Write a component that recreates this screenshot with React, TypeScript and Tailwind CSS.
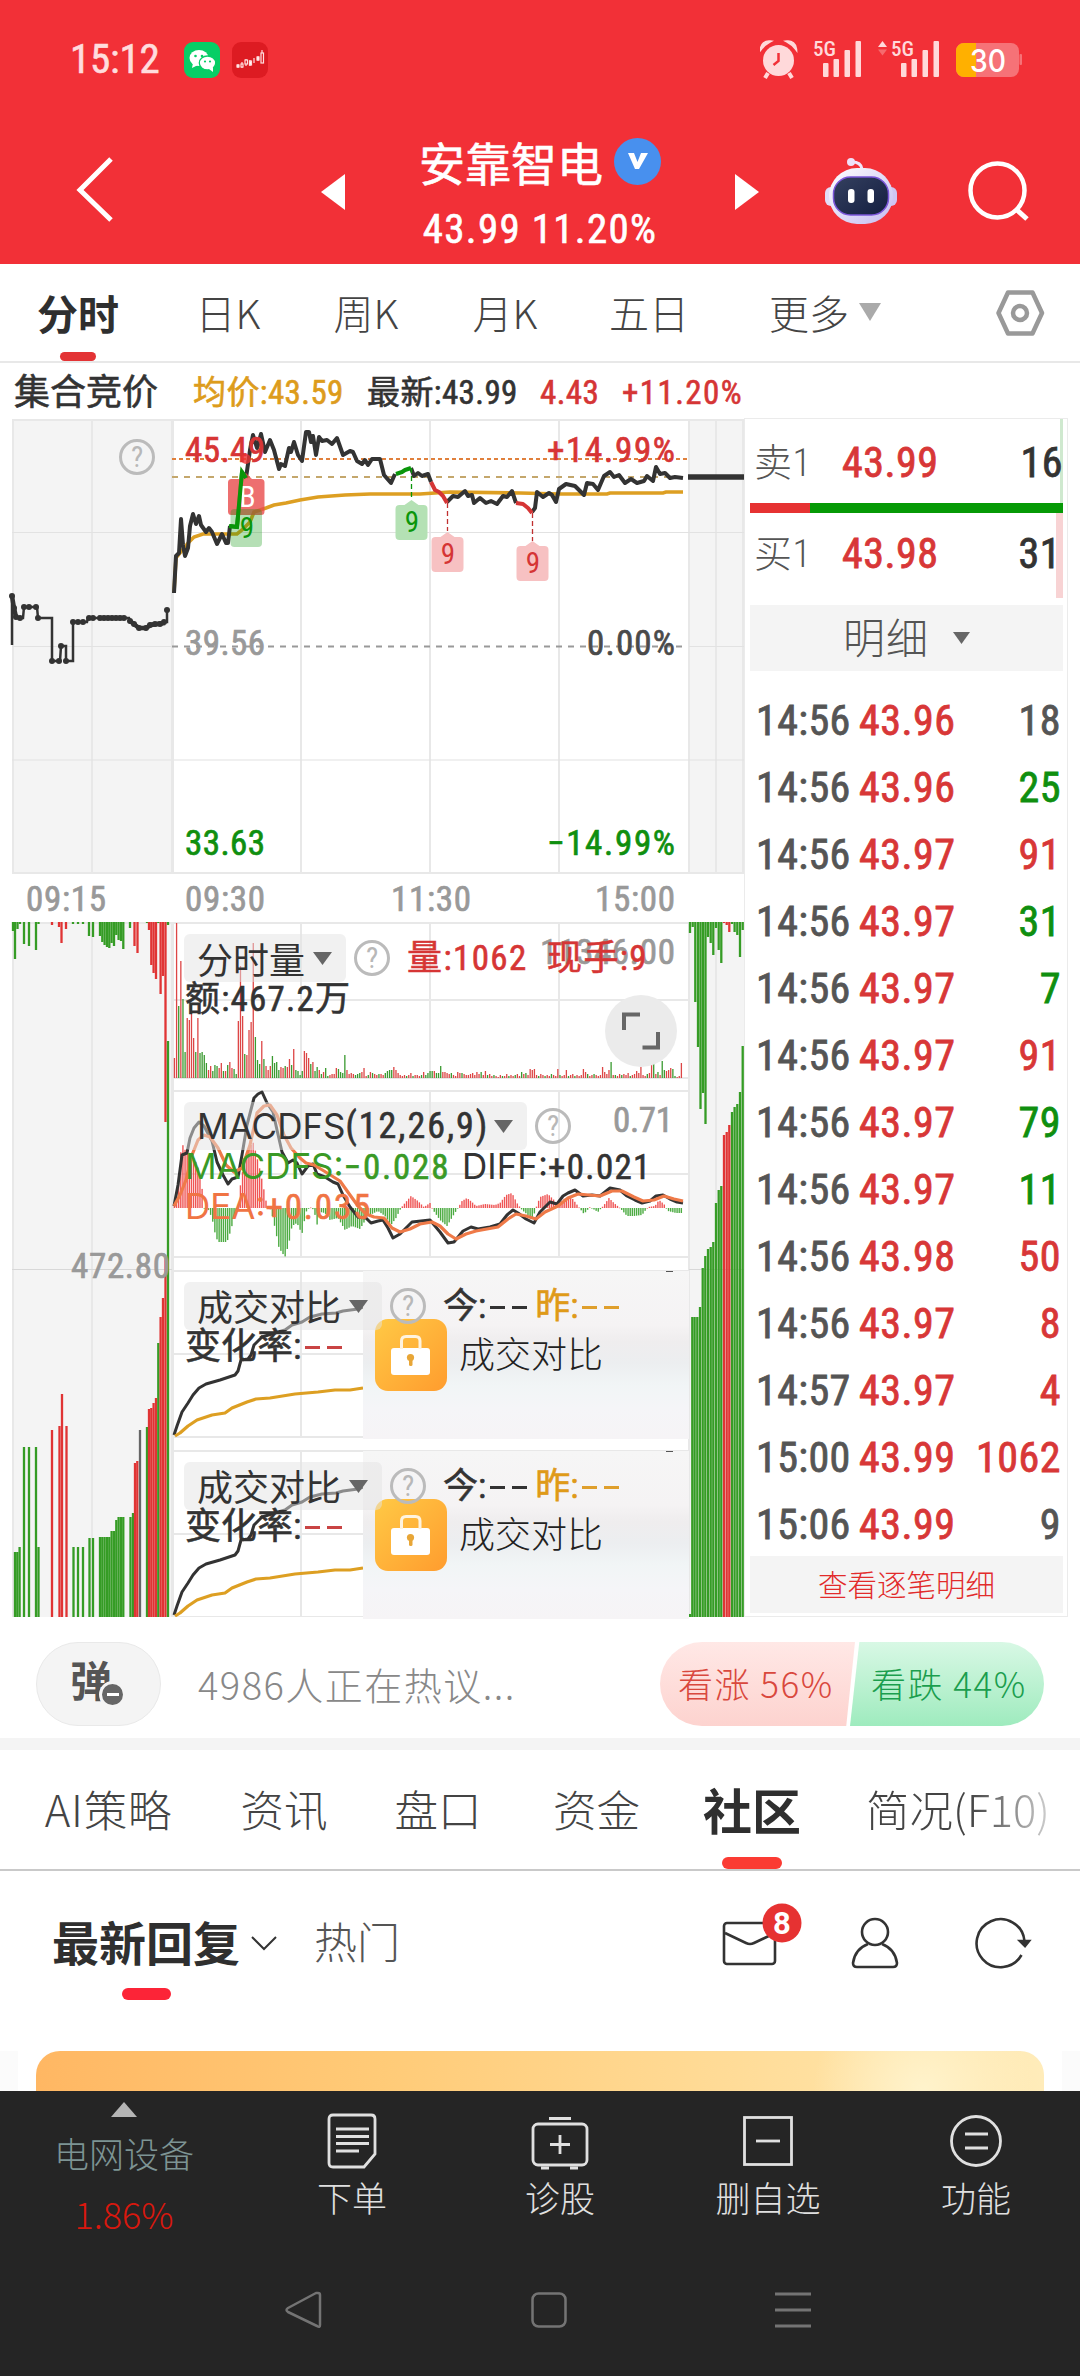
import type { ReactNode } from "react";

const NUM = "font-[Roboto,Noto_Sans_CJK_SC,sans-serif] font-stretch-[75%]";
// regular cut with a hairline stroke, sits between regular and medium
const MED = "font-normal [-webkit-text-stroke-width:0.6px]";
const RED = "#e03434";
const GREEN = "#359c25";

export default function App() {
  return (
    <div className="w-[1080px] h-[2376px] bg-white overflow-hidden flex flex-col font-[Noto_Sans_CJK_SC,sans-serif] text-[#333] whitespace-nowrap">
      <Header />
      <PeriodTabs />
      <QuoteLine />
      <main className="flex h-[1199px]">
        <Charts />
        <OrderPanel />
      </main>
      <HotBar />
      <div className="h-3 bg-[#f4f4f4]" />
      <SectionTabs />
      <CommunityBar />
      <BottomBar />
    </div>
  );
}

/* Header */
function Header() {
  return (
    <header className="h-[264px] bg-[#f23037] text-white shrink-0">
      <div className="h-[120px] pl-[70px] pr-[57px] flex items-center">
        <span className={`${NUM} ${MED} text-[41px] leading-none text-[#ffdcdd] w-[114px] -mt-[2px] tracking-[-0.2px]`}>15:12</span>
        <svg width="84" height="36" viewBox="184 42 84 36">
          <rect x="184" y="42" width="36" height="36" rx="9" fill="#07ce66" />
          <ellipse cx="199" cy="58" rx="9.5" ry="8" fill="#fff" />
          <path d="M193 63l-1 5 6-3z" fill="#fff" />
          <ellipse cx="207.500" cy="63" rx="8.200" ry="7" fill="#fff" stroke="#07ce66" strokeWidth="1.300" />
          <path d="M209 69l4 3 0-5z" fill="#fff" />
          <g fill="#07ce66">
            <circle cx="195.500" cy="56" r="1.300" />
            <circle cx="202" cy="56" r="1.300" />
            <circle cx="205" cy="61.500" r="1.100" />
            <circle cx="210" cy="61.500" r="1.100" />
          </g>
          <rect x="232" y="42" width="36" height="36" rx="9" fill="#dd1b22" />
          <g stroke="#ffdfe0" strokeWidth="1.200" fill="#fff">
            <path d="M238 64v4M242 62v6M246 59v7M250 60v6M254 58v5M258 56v5M262 50v12" />
            <rect x="237" y="65" width="2" height="2" />
            <rect x="241" y="64" width="2" height="3" fill="#dd1b22" />
            <rect x="245" y="60" width="2.500" height="4" fill="#dd1b22" />
            <rect x="249.500" y="61" width="2" height="4" />
            <rect x="257" y="57" width="2" height="3" />
            <rect x="261" y="53" width="2.500" height="10" fill="#dd1b22" />
          </g>
        </svg>
        <svg className="ml-auto" width="263" height="44" viewBox="760 38 263 44">
          <g fill="#ffd9da">
            <circle cx="778.500" cy="60.500" r="15.500" />
            <path d="M761 49a8 8 0 0 1 9-7.500q-5.500 3-9 7.500zM796 49a8 8 0 0 0-9-7.500q5.500 3 9 7.500z" stroke="#ffd9da" strokeWidth="2.500" />
            <path d="M768 73l-3 5M789 73l3 5" stroke="#ffd9da" strokeWidth="4" />
            <path d="M778.500 53v8l-5 4" stroke="#f23037" strokeWidth="2.500" fill="none" />
            {[0, 78].map((dx) => (
              <g key={dx} transform={`translate(${dx} 0)`}>
                <text x="813" y="55.500" fontSize="21" textLength="23" lengthAdjust="spacingAndGlyphs" className={`${NUM} font-medium`}>5G</text>
                <rect x="823" y="63" width="5.500" height="14" rx="1" />
                <rect x="833.500" y="59" width="5.500" height="18" rx="1" />
                <rect x="844.500" y="50" width="5.500" height="27" rx="1" />
                <rect x="855.500" y="41" width="5.500" height="36" rx="1" />
              </g>
            ))}
            <path d="M878 47l4.500-6 4.500 6z" />
            <path d="M878 49.500l4.500 6 4.500-6z" fill="#f66a6e" />
          </g>
          <clipPath id="bat"><rect x="956" y="43" width="63" height="34" rx="8" /></clipPath>
          <g clipPath="url(#bat)">
            <rect x="956" y="43" width="63" height="34" fill="#f67277" />
            <rect x="956" y="43" width="20" height="34" fill="#ffb000" />
          </g>
          <rect x="1019.500" y="54" width="2.500" height="11" rx="1" fill="#f67277" />
          <text x="970" y="71.500" fontSize="31" textLength="36" lengthAdjust="spacingAndGlyphs" fill="#fff" className="font-[Inter,sans-serif] font-medium">30</text>
        </svg>
      </div>
      <div className="h-[144px] flex items-center">
        <svg className="ml-[72px] mb-1" width="46" height="76" viewBox="72 152 46 76">
          <path d="M111 159L80 190l31 30" fill="none" stroke="#fff" strokeWidth="5" />
        </svg>
        <svg className="ml-[203px]" width="24" height="36" viewBox="0 0 24 36">
          <path d="M24 0v36L0 18z" fill="#fff" />
        </svg>
        <div className="w-[390px] h-full flex flex-col items-center">
          <div className="flex items-center gap-[11px] mt-[17px]">
            <span className={`${MED} text-[46px] leading-[48px]`}>安靠智电</span>
            <span className="size-[47px] rounded-full bg-[#4890ee] flex items-center justify-center">
              <svg width="24" height="22" viewBox="0 0 24 22"><path d="M2 3l7 16h4L22 3h-7l-3.500 9L8 3z" fill="#fff" /></svg>
            </span>
          </div>
          <div className={`${NUM} ${MED} text-[41px] leading-[44px] mt-[22px] tracking-[1.3px]`}>43.99 11.20%</div>
        </div>
        <svg width="24" height="36" viewBox="0 0 24 36">
          <path d="M0 0v36l24-18z" fill="#fff" />
        </svg>
        <Robot />
        <svg className="ml-[67px]" width="66" height="66" viewBox="962 159 66 66">
          <circle cx="994.500" cy="190.500" r="27" fill="none" stroke="#fff" strokeWidth="4.500" />
          <path d="M1013 209l11 10" stroke="#fff" strokeWidth="5" />
        </svg>
      </div>
    </header>
  );
}

function Robot() {
  return (
    <svg className="ml-[65px]" width="74" height="72" viewBox="824 154 74 72">
      <defs>
        <linearGradient id="rb" x1="0" x2="1" y2="1">
          <stop offset="0" stopColor="#fff" />
          <stop offset="1" stopColor="#c4bbf0" />
        </linearGradient>
        <linearGradient id="rf" x1="0" x2="1" y2="1">
          <stop offset="0" stopColor="#34405f" />
          <stop offset="1" stopColor="#141e40" />
        </linearGradient>
      </defs>
      <path d="M852 160q9 0 10 7" fill="none" stroke="#f1e5fb" strokeWidth="3" />
      <circle cx="851" cy="160" r="4" fill="#efdff8" />
      <rect x="825" y="185" width="12" height="19" rx="6" fill="#e3dcf8" />
      <rect x="885" y="185" width="12" height="19" rx="6" fill="#cfc5f2" />
      <rect x="829" y="166" width="64" height="56" rx="28" fill="url(#rb)" />
      <rect x="833.500" y="175" width="55" height="38" rx="17" fill="url(#rf)" stroke="#7a55d8" strokeWidth="1.500" />
      <rect x="848" y="187" width="6.500" height="14" rx="3" fill="#fff" />
      <rect x="867.500" y="187" width="6.500" height="14" rx="3" fill="#fff" />
    </svg>
  );
}

function PeriodTabs() {
  return (
    <nav className="h-[99px] border-b-2 border-[#e8e8e8] grid grid-cols-[156px_144px_132px_146px_142px_200px_160px] items-center text-[40px] leading-none font-light text-[#444] shrink-0 text-center">
      <span className="text-[41px] font-bold text-[#2f2f2f] relative h-full flex items-center justify-center pb-px">
        分时
        <i className="absolute bottom-0 left-[60px] w-9 h-[9px] rounded-full bg-[#e33335]" />
      </span>
      <span className="pb-px">日K</span>
      <span className="pb-px">周K</span>
      <span className="pb-px">月K</span>
      <span className="pb-px">五日</span>
      <span className="pb-px pl-[49px] flex items-center gap-[10px]">
        更多
        <svg width="22" height="18" viewBox="0 0 22 18"><path d="M0 0h22L11 18z" fill="#aaa" /></svg>
      </span>
      <svg className="ml-[74px]" width="52" height="48" viewBox="994 290 52 48">
        <path d="M1008 293.500h24.500l9.500 20.500-9.500 20.500h-24.500l-9.500-20.500z" fill="none" stroke="#999" strokeWidth="4.500" strokeLinejoin="round" />
        <circle cx="1020" cy="314" r="7" fill="none" stroke="#999" strokeWidth="4.500" />
      </svg>
    </nav>
  );
}

function QuoteLine() {
  return (
    <div className={`${NUM} ${MED} h-[55px] pt-1 pl-[14px] flex items-center text-[33px] leading-none shrink-0`}>
      <span className="w-[179px] text-[36px]">集合竞价</span>
      <span className="w-[174px] text-[#dd9c1c] tracking-[0.4px]">均价:43.59</span>
      <span className="w-[173px] tracking-[0.4px]">最新:43.99</span>
      <span className="w-[82px] text-[#d53535] tracking-[0.4px]">4.43</span>
      <span className="text-[#d53535] tracking-[1.4px]">+11.20%</span>
    </div>
  );
}

/* Charts */
const price: [string, string][] = [
  ["#333", "174,593 176,556 179,553 181,519 183,545 185,556 188,548 190,526 193,514 196,524 199,516 201,525 206,532 209,528 212,532 217,544 222,534 226,543 228,543 230,526"],
  ["#333", "246,478 250,450 253,435 257,448 261,434 265,452 270,440 274,450 279,469 281,464 285,466 289,448 291,452 294,442 298,455 302,461 306,432 309,432 311,442 313,436 316,455 319,437 322,441 327,440 332,444 337,438 343,455 350,451 353,452 357,461 362,464 365,460 368,465 372,459 376,459 380,459 384,475 391,483 395,474"],
  ["#333", "411,468 414,476 418,473 422,476 428,474 431,482"],
  ["#333", "447,502 453,496 458,497 465,491 468,496 472,495 474,503 480,498 486,503 491,501 497,504 503,496 507,497 512,491 516,503"],
  ["#333", "532,512 535,508 537,492 543,497 549,493 552,495 556,502 559,489 566,484 575,486 584,495 587,483 593,484 598,490 604,476 610,472 614,477 619,475 625,483 631,479 637,483 644,481 647,476 653,481 656,467 660,474 665,473 670,478 675,477 683,478"],
  ["#0a960a", "229,526 237,527 242,472 246,478"],
  ["#0a960a", "396,474 402,472 405,470 411,468"],
  ["#d53535", "431,482 435,490 439,492 443,496 447,503"],
  ["#d53535", "516,503 523,504 528,508 532,513"],
];

const avg =
  "174,592 176,558 180,553 189,542 194,537 203,534 237,534 242,530 250,522 254,512 266,508 274,505 286,503 300,500 318,497 345,495 370,494 420,494 450,492 520,493 560,494 607,494 610,493 663,493 666,492 683,492";

const auction =
  "12,645 12,596 16,618 23,618 24,607 37,607 38,618 52,618 52,661 60,661 61,646 66,646 66,661 73,661 73,622 87,622 88,618 129,618 130,622 139,628 147,628 150,624 165,622 167,622 167,610";

const auctionDots =
  "12,596 14,608 16,617 20,618 24,607 29,607 36,607 38,618 52,661 59,661 61,646 66,661 73,622 78,622 83,622 89,618 93,618 100,618 104,618 108,618 112,618 116,618 120,618 124,618 130,621 134,624 139,628 146,628 150,625 155,624 160,624 164,622 167,610";

// [x, bottom of the hanging bar], red when the third value is 1
const leftTop: number[][] = [
  [13, 931], [15, 959], [17.5, 929], [20, 924], [24, 944], [29, 946], [36, 950], [38.5, 924], [52, 925, 1], [59, 927, 1], [61.5, 943, 1], [66, 929, 1],
  [73, 924], [78, 924], [83, 924], [89, 936], [93, 937], [100, 936], [102.3, 942], [104.6, 945], [107, 947], [109.3, 948], [111.6, 943], [114, 946], [116.3, 935], [118.6, 940], [121, 941], [123.3, 949],
  [130, 928], [134.5, 946, 1], [137.5, 953, 1], [147, 923], [149, 930, 1], [151.3, 965, 1], [153.6, 973, 1], [156, 979, 1], [158.3, 923], [160.6, 994, 1], [163, 976, 1], [165.5, 1122, 1], [168, 925],
];
const leftBottom: number[][] = [
  [15, 1552], [17.3, 1552], [19.6, 1547], [24, 1447], [29, 1447], [36, 1447], [38.5, 1547], [52, 1430, 1], [59.5, 1426, 1], [62, 1394, 1], [66.5, 1426, 1], [73.5, 1547], [78, 1547], [83, 1547], [89.5, 1538], [93, 1538],
  [100, 1537], [102.3, 1537], [104.6, 1537], [107, 1537], [109.3, 1537], [111.6, 1531], [114, 1531], [116.3, 1520], [118.6, 1517], [121, 1517], [123.3, 1517], [130.5, 1517], [133, 1513], [135, 1463, 1], [137.3, 1461, 1],
  [140, 1430, 2], [147, 1427], [149, 1409, 1], [151.3, 1408, 1], [153.6, 1403, 1], [156, 1398, 1], [158.3, 1343], [160.6, 1317, 1], [163, 1298, 1], [165.5, 1258, 1], [168, 1041],
];
const rightTop: number[][] = [
  [690, 933], [692.7, 927], [695.3, 1002], [698, 1047], [700.5, 1109], [703, 1093], [705.5, 1124], [708, 937], [710.7, 943], [713.3, 955], [716, 928], [718.7, 950], [721.3, 963], [724, 923, 1], [726.7, 925, 1], [729.3, 932, 1], [732, 924], [734.6, 932], [737.3, 935], [740, 957], [742.7, 930],
];
const rightBottom: number[][] = [
  [690, 1614], [692.3, 1317], [694.6, 1317], [697.3, 1317], [700, 1307], [702.7, 1268], [705.3, 1256], [708, 1249], [710.7, 1247], [713.3, 1242], [716, 1203], [718.7, 1190], [721.3, 1186], [724, 1135, 1], [726.7, 1132, 1], [729.3, 1125, 1], [732, 1112], [734.6, 1107], [737.3, 1104], [740, 1092], [742.7, 1046],
];

// minute volume, negative for a falling minute
const vol = [
  20, 155, -72, 117, -79, -26, 60, 58, 75, 40, -26, 60, -25, -26, -23, -15, 8, 12, -7, -13, -12, 10, 15, -7, 7, -13, 16, 10, -9, -4, 57, 112, 62, -24, 23, 48, 56, 135, -41, -18, -14, 37, -19, 12, 8, 12, -22, -15, -16, -8, 11, 10, -12, 11, 19, -13, 29, -8, -7, -3, -7, 27, 25, 20, -14, 16, -7, -11, 8, -4, 6, -10, -2, 3, 4, 4, 10, -9, -6, -5, -23, 8, 4, 5, 4, -3, -4, -5, 6, 10, 2, -3, 6, -5, 4, 3, -4, 4, 3, -5, -7, -8, -8, 11, 8, 5, 3, 2, 3, -2, 3, 5, -2, 3, 3, 2, -3, 6, -3, -5, -7, -7, 7, -5, -5, -12, 6, 6, 5, 4, -5, 3, 2, 6, 5, -5, 4, 3, 3, 4, 5, 3, 6, 4, -6, 3, 7, -3, 4, 2, -3, 2, 1, 3, -2, 2, 4, -2, 3, 2, -3, 4, 2, -6, 4, -5, 3, 9, 8, 9, 3, -2, 4, 3, -2, 3, 2, -4, 3, 2, 9, -3, 2, 3, 8, -2, 3, 4, -2, 3, 2, 3, 9, 6, -4, 2, 3, -4, 3, 2, 3, 11, 6, 4, 8, -16, 3, -3, 2, 4, -3, 4, 3, 5, -2, 3, 4, 7, 5, 11, 3, 2, -4, 5, 18, -16, 4, -6, 3, -17, -8, 7, 8, 10, -9, -2, 1, 2, 15,
];

// [x, value] knots of the MACD histogram
const macd = [
  [174, 0], [178, 25], [181, 58], [183, 63], [186, 56], [190, 55], [195, 48], [198, 40], [202, 20], [204, 0], [208, -1], [212, -10], [216, -30], [219, -34], [227, -34], [231, -22], [235, -5], [238, 0], [240, 20], [244, 45], [249, 60], [253, 66], [256, 55], [260, 38], [264, 18], [267, 2], [271, -2], [275, -20], [279, -40], [285, -49], [289, -35], [292, -18], [297, -15], [302, -26], [306, -4], [310, 1], [314, -2], [317, -17], [320, -4], [325, -5], [330, -12], [338, -10], [345, -22], [352, -18], [360, -21], [368, -8], [378, -3], [385, -8], [391, -17], [396, -10], [401, 0], [405, 5], [411, 12], [418, 7], [424, 1], [430, 5], [433, -2], [440, -12], [447, -18], [453, -8], [458, 0], [462, 7], [467, 10], [472, 6], [476, 2], [485, 4], [495, 3], [500, 5], [506, 13], [512, 15], [517, 5], [522, -2], [528, -7], [533, -10], [536, 0], [540, 11], [548, 14], [554, 8], [558, 3], [565, 10], [572, 10], [578, 2], [584, -6], [590, 1], [598, -4], [604, 3], [609, 10], [614, 5], [620, 0], [627, -8], [634, -8], [642, -7], [648, 1], [655, 2], [659, 8], [664, 4], [668, -3], [676, -5], [684, -5],
];

const diff =
  "174,1206 178,1185 182,1155 187,1153 190,1138 194,1128 199,1122 204,1126 212,1141 217,1162 223,1175 228,1184 232,1179 238,1177 242,1155 247,1125 254,1098 258,1094 262,1092 267,1103 273,1112 277,1130 282,1152 288,1163 293,1160 297,1163 302,1174 308,1166 313,1164 317,1174 325,1177 333,1182 338,1184 343,1195 350,1207 358,1217 366,1218 371,1223 378,1221 383,1220 388,1228 393,1238 400,1234 406,1228 412,1222 430,1220 440,1232 448,1243 454,1242 463,1231 471,1227 478,1229 490,1227 500,1224 507,1215 513,1210 518,1213 526,1219 534,1223 540,1212 550,1202 557,1204 563,1196 568,1193 575,1190 583,1196 592,1195 600,1196 605,1192 610,1188 620,1190 627,1196 635,1200 642,1203 650,1201 656,1196 663,1195 670,1199 677,1202 683,1203";
const dea =
  "174,1206 180,1195 186,1180 192,1155 198,1140 204,1135 210,1137 218,1148 226,1165 234,1172 242,1168 250,1145 257,1113 264,1106 270,1105 277,1115 284,1135 291,1148 300,1158 306,1163 314,1165 324,1171 340,1181 350,1195 358,1206 366,1214 374,1217 384,1218 392,1228 400,1232 410,1229 420,1224 432,1222 440,1226 448,1234 456,1239 466,1234 476,1231 498,1227 508,1219 516,1214 526,1216 536,1219 545,1212 558,1206 568,1198 578,1194 600,1196 612,1191 622,1191 634,1197 643,1201 654,1200 664,1196 674,1199 683,1201";

const today =
  "174,1435 177,1426 182,1412 188,1403 193,1395 199,1388 206,1384 220,1380 235,1375 238,1371 241,1360 248,1359 251,1355 254,1345 262,1337 278,1332 285,1330 292,1325 302,1322 310,1317 322,1314 336,1313 343,1311 358,1309 363,1307";
const yesterday =
  "175,1436 180,1433 188,1426 197,1420 212,1415 225,1413 232,1408 247,1402 256,1399 270,1398 295,1394 318,1392 335,1390 350,1390 363,1388";

function macdAt(x: number) {
  const i = macd.findIndex(([kx]) => kx > x);
  if (i < 1) return 0;
  const [x0, v0] = macd[i - 1];
  const [x1, v1] = macd[i];
  return v0 + ((v1 - v0) * (x - x0)) / (x1 - x0);
}

function Axis({ x, y, w, fill, children }: { x: number; y: number; w: number; fill: string; children: string }) {
  return (
    <text x={x} y={y} textLength={w} fill={fill} stroke={fill} strokeWidth="0.700" fontSize="35" className={NUM}>
      {children}
    </text>
  );
}

function Bars({ data, base }: { data: number[][]; base: number }) {
  return (
    <>
      {data.map(([x, y, c]) => (
        <rect key={x} x={x - 1.15} y={Math.min(y, base)} width="2.300" height={Math.abs(base - y)} fill={c === 2 ? "#666" : c ? RED : GREEN} />
      ))}
    </>
  );
}

function Flag({ x, y, green }: { x: number; y: number; green?: boolean }) {
  const c = green ? "#0a960a" : "#d53535";
  return (
    <g>
      <path d={`M${x} ${y - 5}l7 5h5q4 0 4 4v27q0 4-4 4h-24q-4 0-4-4v-27q0-4 4-4h5z`} fill={green ? "#b4e1b4" : "#f7c1c2"} />
      <text x={x + 0.5} y={y + 27} textAnchor="middle" fontSize="29" fill={c} className={NUM}>9</text>
    </g>
  );
}

function Charts() {
  return (
    <section className="relative w-[744px] h-full shrink-0">
      <svg width="744" height="1199" viewBox="0 418 744 1199">
        <rect x="12" y="420" width="160" height="453" fill="#f4f4f4" />
        <rect x="689" y="420" width="55" height="453" fill="#f4f4f4" />
        <rect x="12" y="922" width="160" height="695" fill="#f4f4f4" />
        <rect x="689" y="922" width="55" height="695" fill="#f4f4f4" />
        <g stroke="#e8e8e8" strokeWidth="2" fill="none">
          <path d="M13 420v453M92 420v453M301 420v453M430 420v453M559 420v453M689 420v453M716 420v453M743 420v453" />
          <path d="M12 420h732M12 873h732" />
          <path d="M12 532.500h732M12 646.500h160M689 646.500h55M12 760h732" strokeWidth="1.200" stroke="#e2e2e2" />
          <path d="M172.500 420v453M172.500 922v695" strokeWidth="3" />
          <path d="M13 922v695M92 922v695M689 922v695M716 922v695" />
          <path d="M12 923h732M173 1000h516M173 1078h516M173 1091h516M173 1174h516M173 1257h516" />
          <path d="M173 1271h516M173 1354h516M173 1437h516M173 1451h516M173 1534h516M173 1617h516" />
          <path d="M301 922v156M430 922v156M559 922v156M301 1091v166M430 1091v166M559 1091v166M301 1271v166M301 1451v166" />
          <path d="M12 1269.500h160M689 1269.500h55" strokeWidth="1.200" stroke="#d8d8d8" />
        </g>

        {/* price */}
        <path d="M172 459h517" stroke="#e0803c" strokeWidth="2" strokeDasharray="4 3" />
        <path d="M172 477h500" stroke="#c4a76c" strokeWidth="2" strokeDasharray="6 6" />
        <path d="M172 646.500h511" stroke="#999" strokeWidth="2" strokeDasharray="6 6" />
        <polyline points={auction} fill="none" stroke="#333" strokeWidth="2.500" />
        <path d="M12 596l2 12 2 9M98 618h26M130 621l9 7h7l5-3 14-2" fill="none" stroke="#333" strokeWidth="4.500" />
        {auctionDots.split(" ").map((p) => {
          const [x, y] = p.split(",");
          return <circle key={p} cx={x} cy={y} r="3" fill="#333" />;
        })}
        <Axis x={547} y={462} w={128} fill="#d73535">+14.99%</Axis>
        <Axis x={185} y={655} w={80} fill="#999">39.56</Axis>
        <Axis x={587} y={655} w={88} fill="#4a4a4a">0.00%</Axis>
        <Axis x={185} y={855} w={80} fill="#0f8f0f">33.63</Axis>
        <Axis x={547} y={855} w={128} fill="#0f8f0f">−14.99%</Axis>
        <polyline points={avg} fill="none" stroke="#dd9f22" strokeWidth="3.600" />
        <g fill="none" strokeWidth="4" strokeLinejoin="round">
          {price.map(([c, pts]) => (
            <polyline key={pts} points={pts} stroke={c} />
          ))}
          <path d="M688 477h56" stroke="#333" strokeWidth="5.500" />
        </g>
        <Axis x={185} y={462} w={80} fill="#d73535">45.49</Axis>
        <g strokeWidth="1.300" strokeDasharray="5 3">
          <path d="M411.500 468v30" stroke="#0a960a" />
          <path d="M447.500 503v28M532.500 513v28" stroke="#c03030" />
        </g>
        <circle cx="246" cy="459" r="5" fill="#e33" opacity=".8" />
        <path d="M246 473l6 6h9q3.500 0 3.500 3.500v29q0 3.500-3.500 3.500h-29.500q-3.500 0-3.500-3.500v-29q0-3.500 3.500-3.500h8.500z" fill="#e94b4b" opacity=".8" />
        <text x="247.500" y="507" textAnchor="middle" fontSize="30" fill="#fff" className={NUM}>B</text>
        <path d="M230 526l7 1 5-55 4 6" fill="none" stroke="#0a960a" strokeWidth="4" />
        <rect x="230.500" y="509" width="31.500" height="38" rx="4" fill="#0a960a" opacity=".3" />
        <text x="247" y="538" textAnchor="middle" fontSize="29" fill="#0a960a" className={NUM}>9</text>
        <Flag x={411.5} y={505} green />
        <Flag x={447.5} y={537} />
        <Flag x={532.5} y={546} />

        <Axis x={26} y={911} w={80} fill="#999">09:15</Axis>
        <Axis x={185} y={911} w={80} fill="#999">09:30</Axis>
        <Axis x={391} y={911} w={80} fill="#999">11:30</Axis>
        <Axis x={595} y={911} w={80} fill="#999">15:00</Axis>

        {/* auction volume */}
        <Bars data={leftTop} base={922} />
        <Bars data={leftBottom} base={1617} />
        <Bars data={rightTop} base={922} />
        <Bars data={rightBottom} base={1617} />
        <Axis x={71} y={1278} w={99} fill="#999">472.80</Axis>

        {/* minute volume */}
        {vol.map((v, i) => (
          <rect key={i} x={173.8 + i * 2.13} y={1078 - Math.abs(v)} width="1.300" height={Math.abs(v)} fill={v < 0 ? "#3a9a30" : "#dd4646"} />
        ))}
        <Axis x={540} y={964} w={135} fill="#999">11346.00</Axis>

        {/* macd */}
        {vol.map((_, i) => {
          const x = 174.4 + i * 2.13;
          const v = macdAt(x);
          return <rect key={i} x={x - 0.7} y={v > 0 ? 1208 - v : 1208} width="1.400" height={Math.max(Math.abs(v), 0.6)} fill={v < 0 ? "#4cab42" : "#ef5555"} />;
        })}
        <g fill="none" strokeWidth="3" strokeLinejoin="round">
          <polyline points={diff} stroke="#333" />
          <polyline points={dea} stroke="#ef7a48" strokeWidth="3.200" />
        </g>
        <Axis x={613} y={1132} w={60} fill="#999">0.71</Axis>

        {/* today against yesterday */}
        {[0, 180].map((dy) => (
          <g key={dy} transform={`translate(0 ${dy})`} fill="none" strokeLinejoin="round">
            <polyline points={today} stroke="#333" strokeWidth="3" />
            <polyline points={yesterday} stroke="#dd9f22" strokeWidth="3.200" />
          </g>
        ))}
      </svg>

      <Help className="left-[119px] top-[21px]" />

      <Picker className="left-[184px] top-[516px] w-[162px]">分时量</Picker>
      <Help className="left-[354px] top-[522px]" />
      <p className={`${NUM} ${MED} absolute left-[407px] top-[523px] text-[35px] leading-9 text-[#d63535] tracking-[1.4px] flex`}>
        <span className="w-[140px]">量:1062</span>
        <span>现手:9</span>
      </p>
      <p className={`${NUM} ${MED} absolute left-[185px] top-[564px] text-[35px] leading-9 tracking-[1.2px]`}>额:467.2万</p>
      <div className="absolute left-[605px] top-[577px] size-[72px] rounded-full bg-[#ebebeb]">
        <svg width="72" height="72" viewBox="0 0 72 72">
          <path d="M19 35V19.500h16M37.500 52.500H53V37" fill="none" stroke="#666" strokeWidth="4" />
        </svg>
      </div>

      <Picker className="left-[184px] top-[684px] w-[343px]">
        <span className="font-[Inter,sans-serif] text-[35px]">MACDFS</span>
        <span className={`${NUM} ${MED} tracking-[2px]`}>(12,26,9)</span>
      </Picker>
      <Help className="left-[535px] top-[690px]" />
      <p className="absolute left-[185px] top-[730px] text-[35px] leading-9 font-[Inter,sans-serif] flex">
        <span className="w-[277px] text-[#3a9a26]">MACDFS:<b className={`${NUM} ${MED} tracking-[1.8px]`}>−0.028</b></span>
        <span>DIFF:<b className={`${NUM} ${MED} tracking-[1.3px]`}>+0.021</b></span>
      </p>
      <p className="absolute left-[185px] top-[770px] text-[35px] leading-9 font-[Inter,sans-serif] text-[#f07444]">
        DEA:<b className={`${NUM} ${MED} tracking-[1.8px]`}>+0.035</b>
      </p>

      <Compare className="top-[853px]" />
      <Compare className="top-[1033px]" />
    </section>
  );
}

function Help({ className }: { className: string }) {
  return (
    <span className={`absolute size-9 rounded-full border-[3px] border-[#bbb] flex items-center justify-center ${NUM} text-[29px] leading-none text-[#b8b8b8] ${className}`}>
      ?
    </span>
  );
}

function Picker({ className, children }: { className: string; children: ReactNode }) {
  return (
    <div className={`absolute h-12 rounded-md bg-[#e3e3e3]/50 pl-[13px] pr-[14px] flex items-center justify-between text-[36px] leading-none ${className}`}>
      <span className="flex items-center">{children}</span>
      <svg width="19" height="13" viewBox="0 0 19 13"><path d="M0 0h19l-9.500 13z" fill="#666" /></svg>
    </div>
  );
}

function Compare({ className }: { className: string }) {
  return (
    <div className={`absolute left-[173px] w-[516px] h-[168px] ${className}`}>
      <div className="absolute left-[190px] w-[326px] h-full bg-[linear-gradient(180deg,#f6f6f6_0%,#f5f3f4_32%,#efedee_42%,#eceef0_55%,#f1f5f6_68%,#f5f5f8_82%,#f6f4f6_100%)]" />
      <div className="absolute left-[202px] top-[48px] size-[72px] rounded-[13px] bg-linear-to-br from-[#ffc945] to-[#ff9c2e]">
        <svg width="72" height="72" viewBox="0 0 72 72">
          <rect x="16" y="29" width="39" height="27" rx="3" fill="#fff" />
          <path d="M26.500 30v-8q0-4.500 4.500-4.500h9.500q4.500 0 4.500 4.500v8" fill="none" stroke="#fff3df" strokeWidth="3" />
          <circle cx="35.500" cy="38.500" r="3.600" fill="#e8a637" />
          <rect x="34" y="39" width="3.500" height="8" rx="1.500" fill="#e8a637" />
        </svg>
      </div>
      <Picker className="left-[11px] top-[11px] w-[198px]">
        <span className="-mt-[3px]">成交对比</span>
      </Picker>
      <Help className="left-[217px] top-[17px]" />
      <p className={`${NUM} ${MED} absolute left-[270px] top-[18px] flex items-center text-[35px] leading-9`}>
        今:<Dashes className="bg-[#333]" />
        <span className="ml-1 text-[#df9a18]">昨:</span><Dashes className="bg-[#df9f2c]" />
      </p>
      <p className={`${NUM} ${MED} absolute left-[12px] top-[58px] flex items-center text-[36px] leading-9`}>
        变化率:<Dashes className="bg-[#c94444]" />
      </p>
      <p className="absolute left-[286px] top-[63px] text-[36px] leading-9 font-light text-[#222]">成交对比</p>
      <i className="absolute left-[493px] top-0 w-[7px] h-px bg-[#555]" />
    </div>
  );
}

function Dashes({ className }: { className: string }) {
  return (
    <span className="flex gap-[7px] mx-1">
      <i className={`w-[15px] h-[3px] ${className}`} />
      <i className={`w-[15px] h-[3px] ${className}`} />
    </span>
  );
}

/* Order book and ticks */
const ticks = [
  ["14:56", "43.96", "18", "text-[#555]"],
  ["14:56", "43.96", "25", "text-[#0f8f0f]"],
  ["14:56", "43.97", "91", "text-[#d83737]"],
  ["14:56", "43.97", "31", "text-[#0f8f0f]"],
  ["14:56", "43.97", "7", "text-[#0f8f0f]"],
  ["14:56", "43.97", "91", "text-[#d83737]"],
  ["14:56", "43.97", "79", "text-[#0f8f0f]"],
  ["14:56", "43.97", "11", "text-[#0f8f0f]"],
  ["14:56", "43.98", "50", "text-[#d83737]"],
  ["14:56", "43.97", "8", "text-[#d83737]"],
  ["14:57", "43.97", "4", "text-[#d83737]"],
  ["15:00", "43.99", "1062", "text-[#d83737]"],
  ["15:06", "43.99", "9", "text-[#555]"],
];

function OrderPanel() {
  return (
    <aside className={`${NUM} w-[324px] h-full border border-[#ebebeb] pl-[5px] pr-1 text-[42px] leading-none font-normal [-webkit-text-stroke-width:0.8px] tracking-[0.5px]`}>
      <div className="h-[84px] pl-1 pt-1 flex items-center border-r-[3px] border-[#cfe9cf]">
        <span className="w-[88px] text-[38px] font-light text-[#555] [-webkit-text-stroke-width:0]">卖1</span>
        <span className="text-[#d83737]">43.99</span>
        <span className="ml-auto -mr-[3px]">16</span>
      </div>
      <div className="flex h-[10px]">
        <i className="w-[60px] bg-[#e63232]" />
        <i className="flex-1 bg-[#069a06]" />
      </div>
      <div className="h-[85px] pl-1 pb-1 flex items-center border-r-[7px] border-[#f8d3d4]">
        <span className="w-[88px] text-[38px] font-light text-[#555] [-webkit-text-stroke-width:0]">买1</span>
        <span className="text-[#d83737]">43.98</span>
        <span className="ml-auto -mr-[5px]">31</span>
      </div>
      <div className="mt-[7px] h-[66px] bg-[#f4f4f4] flex items-center justify-center gap-[24px] text-[#555]">
        <span className="pt-1 text-[42px] font-light tracking-[1px] [-webkit-text-stroke-width:0]">明细</span>
        <svg width="17" height="12" viewBox="0 0 17 12"><path d="M0 0h17L8.500 12z" fill="#666" /></svg>
      </div>
      <div className="pt-4">
        {ticks.map(([t, p, v, c], i) => (
          <div key={i} className="h-[67px] flex items-center pl-[6px] pr-[2px]">
            <span className="w-[103px] text-[#555] tracking-[0.4px]">{t}</span>
            <span className="text-[#d83737]">{p}</span>
            <span className={`ml-auto ${c}`}>{v}</span>
          </div>
        ))}
      </div>
      <div className="-mt-[2px] h-[57px] pt-1 bg-[#f4f4f4] flex items-center justify-center text-[29.5px] font-light tracking-normal text-[#e22b2b] [-webkit-text-stroke-width:0]">查看逐笔明细</div>
    </aside>
  );
}

function HotBar() {
  return (
    <div className="h-[121px] pt-[25px] px-9 flex shrink-0">
      <div className="relative w-[125px] h-[84px] rounded-full bg-[#f4f4f4] border border-[#e9e9e9]">
        <span className="absolute left-[33px] top-[15px] text-[42px] leading-none font-bold text-[#555]">弹</span>
        <span className="absolute left-[62px] top-[38px] size-[27px] rounded-full bg-[#666] border-[3px] border-[#f4f4f4] flex items-center justify-center">
          <i className="w-3 h-[3px] bg-white" />
        </span>
      </div>
      <p className="ml-[37px] text-[38px] leading-[84px] font-light text-[#888] tracking-[1.5px]">4986人正在热议...</p>
      <div className="ml-auto w-[384px] h-[84px] flex text-[35px] leading-[82px] font-light tracking-[1.5px]">
        <div className="w-[195px] pl-[18px] rounded-l-full bg-linear-to-b from-[#ffe8e6] to-[#fdd3cf] text-[#d9483d] [clip-path:polygon(0_0,100%_0,95.5%_100%,0_100%)]">看涨 56%</div>
        <div className="-ml-[5px] w-[194px] pl-[21px] rounded-r-full bg-linear-to-b from-[#d8f8e5] to-[#9eebbe] text-[#1b9e4e] [clip-path:polygon(4.8%_0,100%_0,100%_100%,0_100%)]">看跌 44%</div>
      </div>
    </div>
  );
}

function SectionTabs() {
  return (
    <nav className="h-[121px] border-b-2 border-[#c9c9c9] grid grid-cols-[217px_134px_174px_143px_168px_244px] grid-rows-[119px] text-[43.500px] leading-[118px] font-light text-[#444] text-center shrink-0">
      <span className="tracking-[0.8px]">AI策略</span>
      <span>资讯</span>
      <span>盘口</span>
      <span>资金</span>
      <span className="relative text-[49px] font-bold text-[#2f2f2f]">
        社区
        <i className="absolute bottom-0 left-[54px] w-[60px] h-3 rounded-full bg-[#fb3b33]" />
      </span>
      <span className="bg-linear-to-r from-[#444] from-55% to-[#ddd] to-90% bg-clip-text text-transparent">简况(F10)</span>
    </nav>
  );
}

function CommunityBar() {
  return (
    <section className="h-[220px] shrink-0 flex flex-col">
      <div className="h-[149px] pl-[52px] flex items-start">
        <div className="relative h-[129px] pt-[42px] text-[47px] leading-[56px] font-bold text-[#2f2f2f]">
          最新回复
          <i className="absolute left-[70px] bottom-0 w-[49px] h-3 rounded-full bg-[#fc2437]" />
        </div>
        <svg className="ml-[10px] mt-[64px]" width="28" height="18" viewBox="0 0 28 18">
          <path d="M2 2l12 12L26 2" fill="none" stroke="#333" strokeWidth="2" />
        </svg>
        <span className="ml-[36px] pt-[42px] text-[43px] leading-[54px] font-light text-[#555]">热门</span>
        <svg className="ml-auto mr-[44px] mt-[25px]" width="316" height="78" viewBox="720 1896 316 78" fill="none" stroke="#333" strokeWidth="2.600">
          <rect x="724" y="1923" width="51" height="41" rx="3" />
          <path d="M725 1933l21 10q4 2 8 0l21-10" />
          <circle cx="782" cy="1923" r="19.500" fill="#e63232" stroke="none" />
          <text x="782" y="1934" textAnchor="middle" fontSize="31" fill="#fff" stroke="none" className="font-[Roboto,sans-serif] font-bold">8</text>
          <circle cx="875" cy="1932" r="13" />
          <path d="M868 1944q-13 5-15 19 0 4 4 4h36q4 0 4-4-2-14-15-19" />
          <path d="M1021.500 1955a24 24 0 1 1 3-14" />
          <path d="M1020 1941h9l-4 5z" fill="#333" />
        </svg>
      </div>
      <div className="flex-1 pt-[31px] flex">
        <div className="w-[18px] bg-[#fbfbfb]" />
        <div className="mx-[18px] flex-1 rounded-t-3xl bg-[radial-gradient(circle_at_88%_100%,#fff3cc_0,#fff3cc00_110px),linear-gradient(90deg,#ffb763,#ffcb78_35%,#ffe0a0_78%,#ffecba)]" />
        <div className="w-[18px] bg-[#fbfbfb]" />
      </div>
    </section>
  );
}

const actions: { label: string; icon: ReactNode }[] = [
  {
    label: "下单",
    icon: (
      <>
        <path d="M9 3h38q4 0 4 4v35L40 55H9q-4 0-4-4V7q0-4 4-4z" />
        <path d="M12 17h33M12 24.500h33M12 31.500h33M12 39h23" />
      </>
    ),
  },
  {
    label: "诊股",
    icon: (
      <>
        <rect x="1" y="12" width="54" height="41" rx="5" />
        <path d="M17 6.500h22M28 23v19M18 32.500h20M9 56h8M38 56h8" />
      </>
    ),
  },
  {
    label: "删自选",
    icon: (
      <>
        <rect x="4.500" y="5.500" width="47" height="47" />
        <path d="M16 29h24" />
      </>
    ),
  },
  {
    label: "功能",
    icon: (
      <>
        <circle cx="28" cy="29" r="24.500" />
        <path d="M17 22h23M17 36h23" />
      </>
    ),
  },
];

function BottomBar() {
  return (
    <footer className="h-[285px] bg-[#252525] shrink-0">
      <div className="h-[154px] grid grid-cols-[248px_208px_208px_208px_208px] font-light text-[#e0e0e0] text-[35px] leading-[36px] text-center">
        <div className="pt-[11px] flex flex-col items-center">
          <svg width="26" height="15" viewBox="0 0 26 15"><path d="M13 0l13 15H0z" fill="#b5b5b5" /></svg>
          <span className="mt-[18px] text-[#7d9494]">电网设备</span>
          <span className="mt-[24px] text-[#d8180e] text-[36px]">1.86%</span>
        </div>
        {actions.map((a) => (
          <div key={a.label} className="pt-[21px] flex flex-col items-center">
            <svg width="56" height="58" viewBox="0 0 56 58" fill="none" stroke="#e0e0e0" strokeWidth="2.800" className="overflow-visible">
              {a.icon}
            </svg>
            <span className="mt-[9px]">{a.label}</span>
          </div>
        ))}
      </div>
      <svg className="ml-[284px] mt-[43px]" width="530" height="44" viewBox="284 2288 530 44" fill="none" stroke="#747474" strokeWidth="2.500">
        <path d="M318 2293q2 0 2 2v30q0 3-3 1l-29-14q-3-2 0-4l28-15z" strokeLinejoin="round" />
        <rect x="532.500" y="2293.500" width="33" height="33" rx="6" />
        <path d="M775 2294h36M775 2310h36M775 2326h36" strokeWidth="3" />
      </svg>
    </footer>
  );
}
